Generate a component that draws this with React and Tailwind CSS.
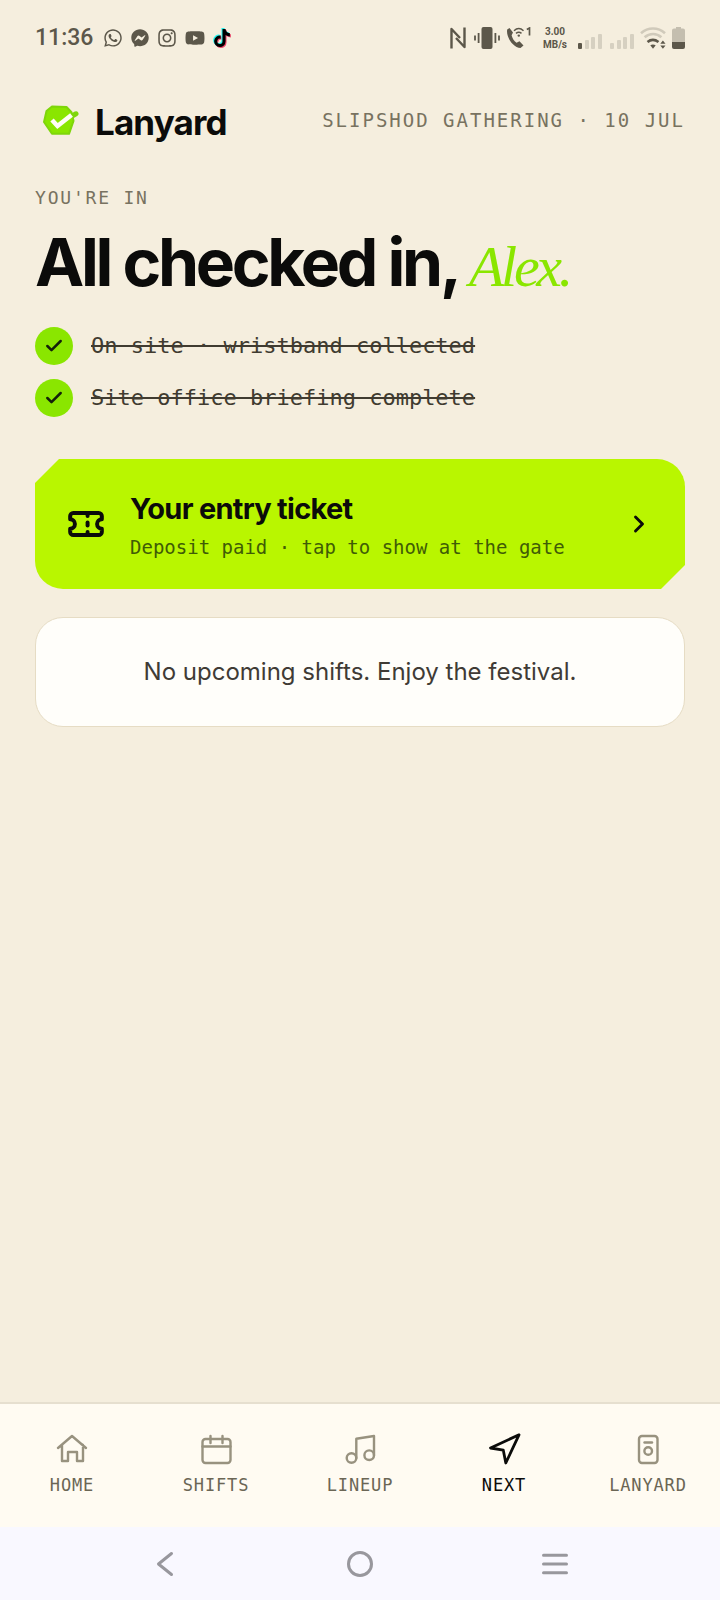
import React, { useState } from "react";
import { Check, ChevronRight, Ticket } from "lucide-react";
import {
  FaFacebookMessenger,
  FaInstagram,
  FaTiktok,
  FaWhatsapp,
  FaYoutube,
} from "react-icons/fa6";

const checklist = [
  "On site · wristband collected",
  "Site office briefing complete",
];

const tabs = [
  {
    id: "home",
    label: "HOME",
    icon: <path d="M4 17 18 5l14 12M8 14v16h6v-9h9v9h6V14" />,
  },
  {
    id: "shifts",
    label: "SHIFTS",
    icon: (
      <>
        <rect x="4.5" y="8" width="28" height="24" rx="3" />
        <path d="M4.5 15.5h28M12.5 5v7M24.5 5v7" />
      </>
    ),
  },
  {
    id: "lineup",
    label: "LINEUP",
    icon: (
      <>
        <circle cx="9.5" cy="27" r="4.8" />
        <circle cx="27.2" cy="24.2" r="4.8" />
        <path d="M14.3 27V7.8L32 5v19.2" />
      </>
    ),
  },
  {
    id: "next",
    label: "NEXT",
    icon: <path d="M33 3.8 4.5 17l12.8 2.2L19.8 32z" />,
  },
  {
    id: "lanyard",
    label: "LANYARD",
    icon: (
      <>
        <rect x="9" y="5" width="18.5" height="27" rx="3" />
        <path d="M14.5 11.5h7.5" />
        <circle cx="18.2" cy="20" r="3.8" />
      </>
    ),
  },
];

function SignalBars({ active }) {
  return (
    <svg className="h-[22px] w-6" viewBox="0 0 24 22" fill="#d6d0c1">
      <rect x="0" y="16" width="4" height="6" rx="1" fill={active ? "#5c574a" : "#d6d0c1"} />
      <rect x="7" y="13" width="4" height="9" rx="1" />
      <rect x="13" y="10" width="4" height="12" rx="1" />
      <rect x="20" y="7" width="4" height="15" rx="1" />
    </svg>
  );
}

function StatusBar() {
  return (
    <div className="flex h-[76px] items-center justify-between px-[35px] text-[#5c574a]">
      <div className="flex items-center gap-2">
        <span className="mr-0.5 font-['Roboto',sans-serif] text-[23px] leading-6 font-medium">
          11:36
        </span>
        <FaWhatsapp className="size-5" />
        <FaFacebookMessenger className="size-[18px]" />
        <FaInstagram className="size-5" />
        <FaYoutube className="size-5" />
        <FaTiktok className="size-[18px] text-black [filter:drop-shadow(-1px_-1px_0_#25f4ee)_drop-shadow(1px_1px_0_#e8466a)]" />
      </div>

      <div className="flex items-center gap-2">
        <div className="flex items-center gap-1.5">
          <svg className="mr-0.5 h-[22px] w-4" viewBox="0 0 16 22" fill="none" stroke="currentColor" strokeWidth="2.4" strokeLinejoin="round">
            <path d="M1.500 21.500V2l8.500 9M14.500 .5V20L6 11" />
          </svg>
          <svg className="h-[22px] w-[26px]" viewBox="0 0 26 22" fill="none" stroke="currentColor" strokeWidth="1.8">
            <rect x="7.500" y="0" width="11" height="22" rx="2" fill="currentColor" stroke="none" />
            <path d="M1 8.500v5M4.600 6v10M21.400 6v10M25 8.500v5" />
          </svg>
          <svg className="h-[22px] w-[26px]" viewBox="0 0 26 22" fill="none" stroke="currentColor">
            <path
              d="M3.500 1 1.200 2.600C-.2 9.500 7 20.800 14.500 21l3-2.600-4-4.200-3 1.600C8 14 6.200 11 5.600 8.200L7 5.400z"
              fill="currentColor"
              stroke="none"
            />
            <path d="M8 3.800c3-2.800 6.500-2.800 9.500 0M10 6.400c2-1.600 3.600-1.600 5.500 0" strokeWidth="1.500" />
            <circle cx="12.800" cy="8.600" r="1.200" fill="currentColor" stroke="none" />
            <path d="M20.800 2.400 23.500 1v7.500" strokeWidth="1.700" />
          </svg>
        </div>
        <span className="mx-[3px] text-center font-['Roboto',sans-serif] text-[10px] leading-[13px] font-bold">
          3.00
          <br />
          MB/s
        </span>
        <SignalBars active />
        <div className="flex items-center gap-1.5">
          <SignalBars />
          <svg className="h-[22px] w-[26px]" viewBox="0 0 26 22" fill="none" strokeWidth="2.600">
            <path d="M1 6.200c7-6.200 17-6.200 24 0M4.600 10.300c5-4.400 12-4.400 16.800 0" stroke="#d0cabb" />
            <path d="M7.500 15c3.300-2.600 7.500-2.600 11 0" stroke="currentColor" />
            <path d="M10.300 18.300c1.600-1 3.600-1 5.400 0L13 21.800z" fill="currentColor" />
            <path d="m20.300 16.800 2.600-3.400 2.600 3.400zM20.300 18.400l2.600 3.400 2.600-3.400z" fill="currentColor" />
          </svg>
          <svg className="h-[22px] w-[13px]" viewBox="0 0 13 22" fill="none">
            <path d="M4 0h5v1.500h2q2 0 2 2V15H0V3.500q0-2 2-2h2z" fill="#c4beaf" />
            <path d="M0 15h13v5q0 2-2 2H2q-2 0-2-2z" fill="currentColor" />
          </svg>
        </div>
      </div>
    </div>
  );
}

function Logo() {
  return (
    <svg className="size-11" viewBox="0 0 44 44" fill="none">
      <path
        d="M17 8.500 31.500 9l5 5.300 2 8.500-4.500 13H17L9 24l2.500-11z"
        fill="#8ae600"
        stroke="#7ed60a"
        strokeWidth="2"
        strokeLinejoin="round"
      />
      <path d="m38 17.500 3-1.700" stroke="#7ed60a" strokeWidth="5" strokeLinecap="round" />
      <path d="m17 22 5.500 6L36.500 17" stroke="#fffdf5" strokeWidth="4.500" />
    </svg>
  );
}

function Header() {
  return (
    <header className="flex h-[88px] items-center justify-between px-[35px]">
      <div className="flex items-center gap-4">
        <Logo />
        <span className="pt-1 font-['Inter',sans-serif] text-[35px] leading-10 font-bold tracking-tight text-[#0b0b0a]">
          Lanyard
        </span>
      </div>
      <span className="font-['DejaVu_Sans_Mono',monospace] text-[19px] tracking-[2px] whitespace-nowrap text-[#787260]">
        SLIPSHOD GATHERING · 10 JUL
      </span>
    </header>
  );
}

function TabBar({ active, onChange }) {
  return (
    <nav className="grid grid-cols-5 border-t-2 border-[#e6dfcf] bg-[#fffbf2] pt-[27px] pb-[30px]">
      {tabs.map((tab) => (
        <button
          key={tab.id}
          type="button"
          onClick={() => onChange(tab.id)}
          aria-current={active === tab.id ? "page" : undefined}
          className={
            active === tab.id
              ? "flex flex-col items-center gap-1.5 text-[#0b0b0a]"
              : "flex flex-col items-center gap-1.5 text-[#6b6655]"
          }
        >
          <svg
            className={active === tab.id ? "size-9" : "size-9 text-[#98927f]"}
            viewBox="0 0 36 36"
            fill="none"
            stroke="currentColor"
            strokeWidth={active === tab.id ? 2.8 : 2.4}
            strokeLinecap="round"
            strokeLinejoin="round"
          >
            {tab.icon}
          </svg>
          <span className="font-['DejaVu_Sans_Mono',monospace] text-[17px] leading-6 tracking-wider">
            {tab.label}
          </span>
        </button>
      ))}
    </nav>
  );
}

function SystemNav() {
  return (
    <div className="grid h-[73px] grid-cols-3 place-items-center bg-[#f9f8ff] px-[67px] text-[#98979d]">
      <button type="button" aria-label="Back">
        <svg className="size-7" viewBox="0 0 28 28" fill="none" stroke="currentColor" strokeWidth="3" strokeLinecap="round" strokeLinejoin="round">
          <path d="M20.500 3.500 7.500 14l13 10.500" />
        </svg>
      </button>
      <button type="button" aria-label="Home">
        <svg className="size-7" viewBox="0 0 28 28" fill="none" stroke="currentColor" strokeWidth="3">
          <circle cx="14" cy="14" r="11.500" />
        </svg>
      </button>
      <button type="button" aria-label="Recent apps">
        <svg className="size-7" viewBox="0 0 28 28" fill="none" stroke="currentColor" strokeWidth="3" strokeLinecap="round">
          <path d="M2.500 5.200h23M2.500 14h23M2.500 22.800h23" />
        </svg>
      </button>
    </div>
  );
}

export default function App() {
  const [tab, setTab] = useState("next");

  return (
    <div className="flex min-h-screen flex-col bg-[#f5eede]">
      <StatusBar />
      <Header />

      <main className="flex-1 px-[35px] pt-5">
        <p className="font-['DejaVu_Sans_Mono',monospace] text-lg leading-7 tracking-widest text-[#787260]">
          YOU'RE IN
        </p>
        <h1 className="mt-2.5 font-['Inter',sans-serif] text-[66px] leading-[80px] font-bold tracking-tighter whitespace-nowrap text-[#0b0b0a]">
          All checked in,{" "}
          <em className="font-['Liberation_Serif',serif] text-[58px] font-normal text-[#8ae600]">
            Alex.
          </em>
        </h1>

        <ul className="mt-5 flex flex-col gap-3.5">
          {checklist.map((item) => (
            <li key={item} className="flex items-center gap-[18px]">
              <span className="grid size-[38px] place-items-center rounded-full bg-[#8ae600] text-[#14210a]">
                <Check size={20} strokeWidth={3} />
              </span>
              <span className="font-['DejaVu_Sans_Mono',monospace] text-[22px] leading-7 text-[#403b30] line-through decoration-2">
                {item}
              </span>
            </li>
          ))}
        </ul>

        <button
          type="button"
          className="mt-[42px] flex w-full items-center rounded-tr-[28px] rounded-bl-[28px] bg-[#b9f600] px-8 py-7 text-left text-[#0b0b0a] [clip-path:polygon(24px_0,100%_0,100%_calc(100%-24px),calc(100%-24px)_100%,0_100%,0_24px)]"
        >
          <Ticket size={38} strokeWidth={2.5} />
          <span className="ml-[25px] flex flex-1 flex-col gap-1.5 pt-1">
            <span className="font-['Inter',sans-serif] text-[29px] leading-9 font-bold tracking-tight">
              Your entry ticket
            </span>
            <span className="font-['DejaVu_Sans_Mono',monospace] text-[19px] leading-7 text-[#3f5c06]">
              Deposit paid · tap to show at the gate
            </span>
          </span>
          <ChevronRight size={28} strokeWidth={2.5} />
        </button>

        <p className="mt-7 rounded-[28px] border border-[#e6dcc4] bg-[#fffefa] px-6 py-9 text-center font-['Inter',sans-serif] text-2xl leading-9 text-[#403b35]">
          No upcoming shifts. Enjoy the festival.
        </p>
      </main>

      <TabBar active={tab} onChange={setTab} />
      <SystemNav />
    </div>
  );
}
